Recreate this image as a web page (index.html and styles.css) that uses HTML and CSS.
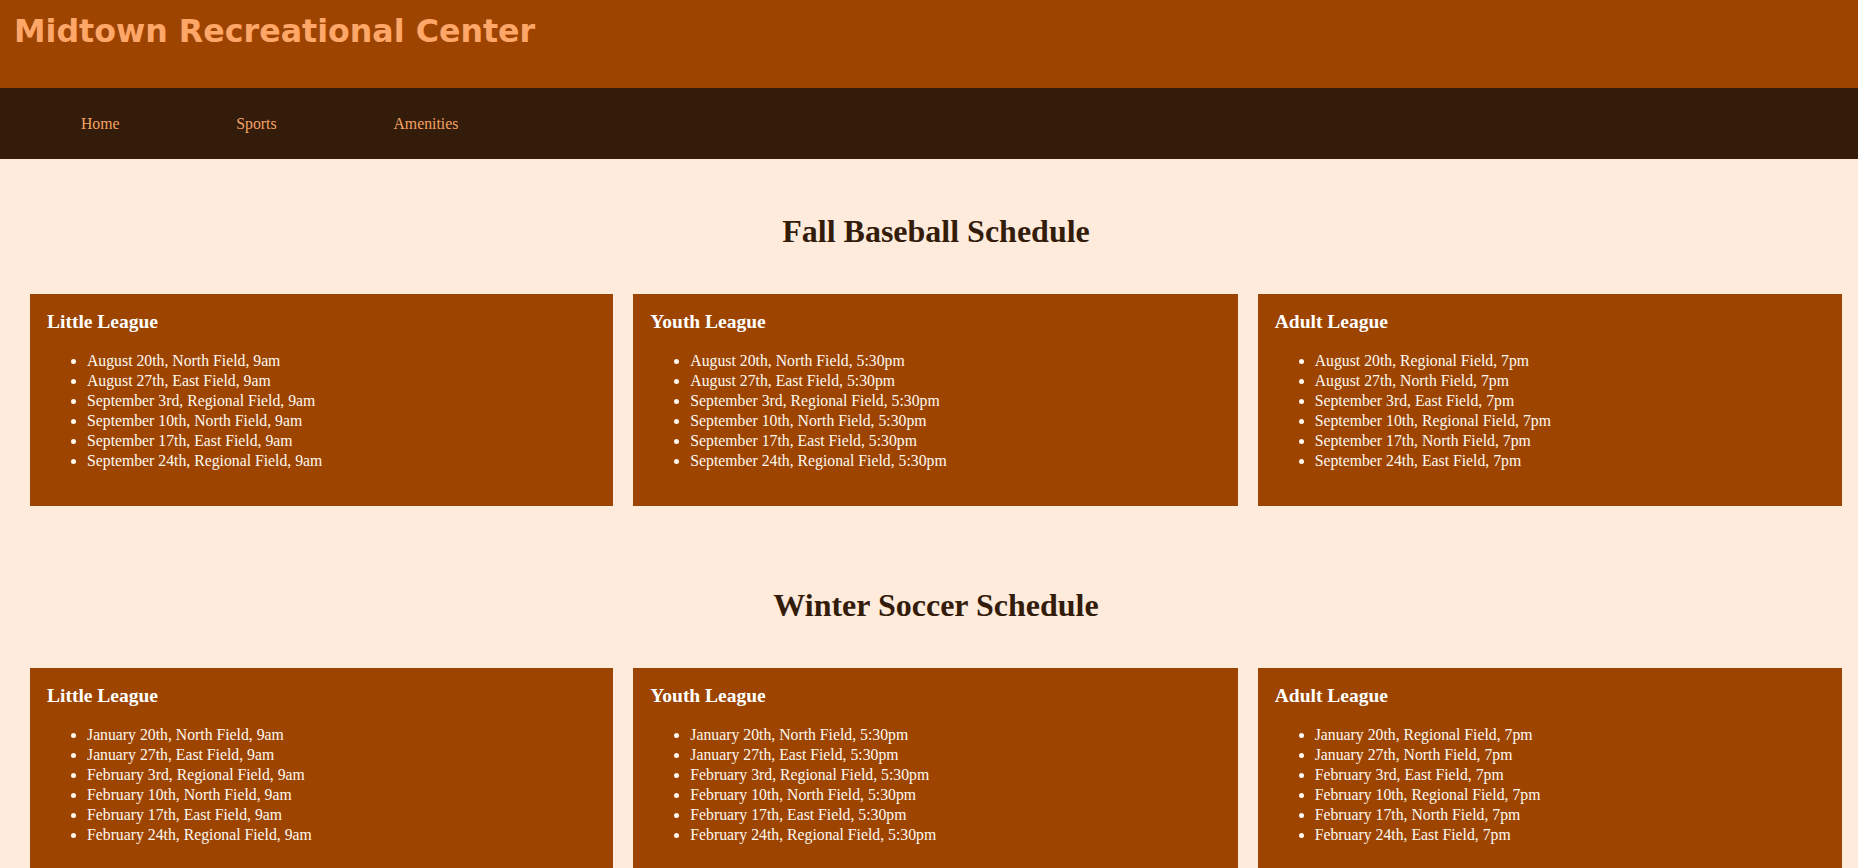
FILE: index.html
```html
<!DOCTYPE html>
<html lang="en">
<head>
<meta charset="utf-8">
<title>Midtown Recreational Center</title>
<link rel="stylesheet" href="styles.css">
</head>
<body>
<header class="site-header">
  <h1 class="site-title">Midtown Recreational Center</h1>
</header>
<nav class="site-nav">
  <ul class="nav-list">
    <li class="nav-item"><a class="nav-link" href="#">Home</a></li>
    <li class="nav-item"><a class="nav-link" href="#">Sports</a></li>
    <li class="nav-item"><a class="nav-link" href="#">Amenities</a></li>
  </ul>
</nav>
<main class="content">
  <section class="schedule">
    <h2 class="schedule-title">Fall Baseball Schedule</h2>
    <div class="cards">
      <div class="card">
        <h3 class="card-title">Little League</h3>
        <ul class="card-list">
          <li>August 20th, North Field, 9am</li>
          <li>August 27th, East Field, 9am</li>
          <li>September 3rd, Regional Field, 9am</li>
          <li>September 10th, North Field, 9am</li>
          <li>September 17th, East Field, 9am</li>
          <li>September 24th, Regional Field, 9am</li>
        </ul>
      </div>
      <div class="card">
        <h3 class="card-title">Youth League</h3>
        <ul class="card-list">
          <li>August 20th, North Field, 5:30pm</li>
          <li>August 27th, East Field, 5:30pm</li>
          <li>September 3rd, Regional Field, 5:30pm</li>
          <li>September 10th, North Field, 5:30pm</li>
          <li>September 17th, East Field, 5:30pm</li>
          <li>September 24th, Regional Field, 5:30pm</li>
        </ul>
      </div>
      <div class="card">
        <h3 class="card-title">Adult League</h3>
        <ul class="card-list">
          <li>August 20th, Regional Field, 7pm</li>
          <li>August 27th, North Field, 7pm</li>
          <li>September 3rd, East Field, 7pm</li>
          <li>September 10th, Regional Field, 7pm</li>
          <li>September 17th, North Field, 7pm</li>
          <li>September 24th, East Field, 7pm</li>
        </ul>
      </div>
    </div>
  </section>
  <section class="schedule">
    <h2 class="schedule-title">Winter Soccer Schedule</h2>
    <div class="cards">
      <div class="card">
        <h3 class="card-title">Little League</h3>
        <ul class="card-list">
          <li>January 20th, North Field, 9am</li>
          <li>January 27th, East Field, 9am</li>
          <li>February 3rd, Regional Field, 9am</li>
          <li>February 10th, North Field, 9am</li>
          <li>February 17th, East Field, 9am</li>
          <li>February 24th, Regional Field, 9am</li>
        </ul>
      </div>
      <div class="card">
        <h3 class="card-title">Youth League</h3>
        <ul class="card-list">
          <li>January 20th, North Field, 5:30pm</li>
          <li>January 27th, East Field, 5:30pm</li>
          <li>February 3rd, Regional Field, 5:30pm</li>
          <li>February 10th, North Field, 5:30pm</li>
          <li>February 17th, East Field, 5:30pm</li>
          <li>February 24th, Regional Field, 5:30pm</li>
        </ul>
      </div>
      <div class="card">
        <h3 class="card-title">Adult League</h3>
        <ul class="card-list">
          <li>January 20th, Regional Field, 7pm</li>
          <li>January 27th, North Field, 7pm</li>
          <li>February 3rd, East Field, 7pm</li>
          <li>February 10th, Regional Field, 7pm</li>
          <li>February 17th, North Field, 7pm</li>
          <li>February 24th, East Field, 7pm</li>
        </ul>
      </div>
    </div>
  </section>
</main>
</body>
</html>
```

FILE: styles.css
```css
html, body {
  margin: 0;
  padding: 0;
}

body {
  background: #feebdc;
  font-family: "Liberation Serif", "Times New Roman", serif;
  font-size: 16px;
  color: #341c0b;
}

.site-header {
  background: #9c4400;
  padding: 13px 14px 14px;
  min-height: 61px;
}

.site-title {
  margin: 0;
  font-family: "DejaVu Sans", sans-serif;
  font-weight: bold;
  font-size: 31.7px;
  color: #ffa769;
}

.site-nav {
  background: #341c0b;
  height: 71px;
  display: flex;
  align-items: center;
}

.nav-list {
  display: flex;
  list-style: none;
  margin: 0;
  padding: 0 0 0 22.5px;
}

.nav-link {
  display: block;
  padding: 0 58.4px;
  font-size: 15.8px;
  color: #f5a262;
  text-decoration: none;
}

.schedule {
  padding: 54px 16px 27px 30px;
}

.schedule-title {
  margin: 0 0 44px;
  text-align: center;
  font-size: 32px;
  font-weight: bold;
  color: #341c0b;
}

.cards {
  display: flex;
  gap: 20px;
}

.card {
  flex: 1 1 auto;
  background: #9c4400;
  color: #fff8f0;
  padding: 17px 17px 19px;
}

.card-title {
  margin: 0 0 18px;
  font-size: 19.5px;
  font-weight: bold;
  color: #ffffff;
}

.card-list {
  margin: 16px 0;
  padding-left: 40px;
  font-size: 15.75px;
  line-height: 20px;
}
```
